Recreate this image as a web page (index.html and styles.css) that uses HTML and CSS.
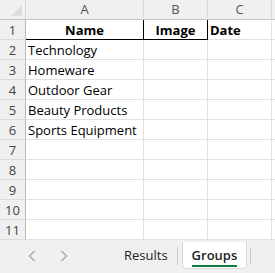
FILE: index.html
```html
<!DOCTYPE html>
<html lang="en">
<head>
    <meta charset="UTF-8">
    <title>Groups</title>
    <link rel="stylesheet" href="styles.css">
</head>
<body>

    <!-- Sheet grid -->
    <div class="sheet">
        <div class="corner"><span class="corner-mark"></span></div>
        <div class="col-head">A</div>
        <div class="col-head">B</div>
        <div class="col-head">C</div>
        <div class="col-head edge"></div>

        <div class="row-head">1</div>
        <div class="cell bold center under">Name</div>
        <div class="cell bold center boxed">Image</div>
        <div class="cell bold">Date</div>
        <div class="cell edge"></div>

        <div class="row-head">2</div>
        <div class="cell">Technology</div>
        <div class="cell"></div>
        <div class="cell"></div>
        <div class="cell edge"></div>

        <div class="row-head">3</div>
        <div class="cell">Homeware</div>
        <div class="cell"></div>
        <div class="cell"></div>
        <div class="cell edge"></div>

        <div class="row-head">4</div>
        <div class="cell">Outdoor Gear</div>
        <div class="cell"></div>
        <div class="cell"></div>
        <div class="cell edge"></div>

        <div class="row-head">5</div>
        <div class="cell">Beauty Products</div>
        <div class="cell"></div>
        <div class="cell"></div>
        <div class="cell edge"></div>

        <div class="row-head">6</div>
        <div class="cell">Sports Equipment</div>
        <div class="cell"></div>
        <div class="cell"></div>
        <div class="cell edge"></div>

        <div class="row-head">7</div>
        <div class="cell"></div>
        <div class="cell"></div>
        <div class="cell"></div>
        <div class="cell edge"></div>

        <div class="row-head">8</div>
        <div class="cell"></div>
        <div class="cell"></div>
        <div class="cell"></div>
        <div class="cell edge"></div>

        <div class="row-head">9</div>
        <div class="cell"></div>
        <div class="cell"></div>
        <div class="cell"></div>
        <div class="cell edge"></div>

        <div class="row-head">10</div>
        <div class="cell"></div>
        <div class="cell"></div>
        <div class="cell"></div>
        <div class="cell edge"></div>

        <div class="row-head">11</div>
        <div class="cell"></div>
        <div class="cell"></div>
        <div class="cell"></div>
        <div class="cell edge"></div>
    </div>

    <!-- Sheet tabs -->
    <div class="tabs">
        <div class="nav">
            <svg width="8" height="12" viewBox="0 0 8 12"><path d="M6.5 1 L1.5 6 L6.5 11" fill="none" stroke="#a6a6a6" stroke-width="1.2"/></svg>
        </div>
        <div class="nav">
            <svg width="8" height="12" viewBox="0 0 8 12"><path d="M1.5 1 L6.5 6 L1.5 11" fill="none" stroke="#a6a6a6" stroke-width="1.2"/></svg>
        </div>
        <div class="tab">Results</div>
        <div class="sep"></div>
        <div class="tab active"><span>Groups</span></div>
        <div class="sep"></div>
    </div>

</body>
</html>
```

FILE: styles.css
```css
body {
    margin: 0;
    padding: 0;
    width: 275px;
    height: 273px;
    overflow: hidden;
    background-color: #ffffff;
    font-family: "Open Sans", "Liberation Sans", sans-serif;
    color: #000;
}

.sheet {
    display: grid;
    grid-template-columns: 26px 118px 64px 64px 1fr;
    grid-auto-rows: 20px;
}

.corner,
.col-head,
.row-head {
    background-color: #f0f0f0;
    box-sizing: border-box;
}

.corner {
    border-right: 1px solid #d8d8d8;
    border-bottom: 1px solid #c4c4c4;
    position: relative;
}

.corner-mark {
    position: absolute;
    left: 11px;
    top: 5px;
    width: 0;
    height: 0;
    border-left: 11px solid transparent;
    border-bottom: 11px solid #dcdcdc;
}

.col-head {
    border-right: 1px solid #d8d8d8;
    border-bottom: 1px solid #c4c4c4;
    color: #555;
    font-size: 13px;
    text-align: center;
    line-height: 19px;
}

.col-head.edge {
    border-right: none;
}

.row-head {
    border-right: 1px solid #b8b8b8;
    border-bottom: 1px solid #dcdcdc;
    color: #444;
    font-size: 13px;
    text-align: center;
    line-height: 20px;
}

.cell {
    box-sizing: border-box;
    border-right: 1px solid #e1e1e1;
    border-bottom: 1px solid #e1e1e1;
    font-size: 13px;
    line-height: 20px;
    padding-left: 2px;
    white-space: nowrap;
    overflow: visible;
}

.cell.edge {
    border-right: none;
}

.bold {
    font-weight: 700;
}

.center {
    text-align: center;
    padding-left: 0;
}

.under {
    border-bottom: 1px solid #000;
}

.boxed {
    border-right: 1px solid #000;
    border-bottom: 1px solid #000;
    box-shadow: -1px 0 0 #000;
}

/* Sheet tabs */
.tabs {
    display: flex;
    align-items: flex-start;
    height: 33px;
    background-color: #f0f0f0;
    font-family: "Open Sans", "Liberation Sans", sans-serif;
    font-size: 13px;
}

.nav {
    width: 32px;
    height: 26px;
    display: flex;
    align-items: center;
    justify-content: center;
    margin-top: 3px;
}

.nav:first-child {
    margin-left: 16px;
}

.tab {
    height: 26px;
    line-height: 26px;
    padding: 0 9px;
    margin-top: 2px;
    color: #222;
}

.tabs .tab:nth-child(3) {
    margin-left: 35px;
}

.tab.active {
    background-color: #fff;
    border: 1px solid #dadada;
    border-top: none;
    border-radius: 0 0 5px 5px;
    font-weight: 600;
    padding: 0 9px;
    margin-left: 4px;
    margin-right: 3px;
}

.tab.active span {
    display: inline-block;
    line-height: 20px;
    border-bottom: 2px solid #107c41;
}

.sep {
    width: 1px;
    height: 18px;
    background-color: #c8c8c8;
    margin-top: 7px;
}
```
